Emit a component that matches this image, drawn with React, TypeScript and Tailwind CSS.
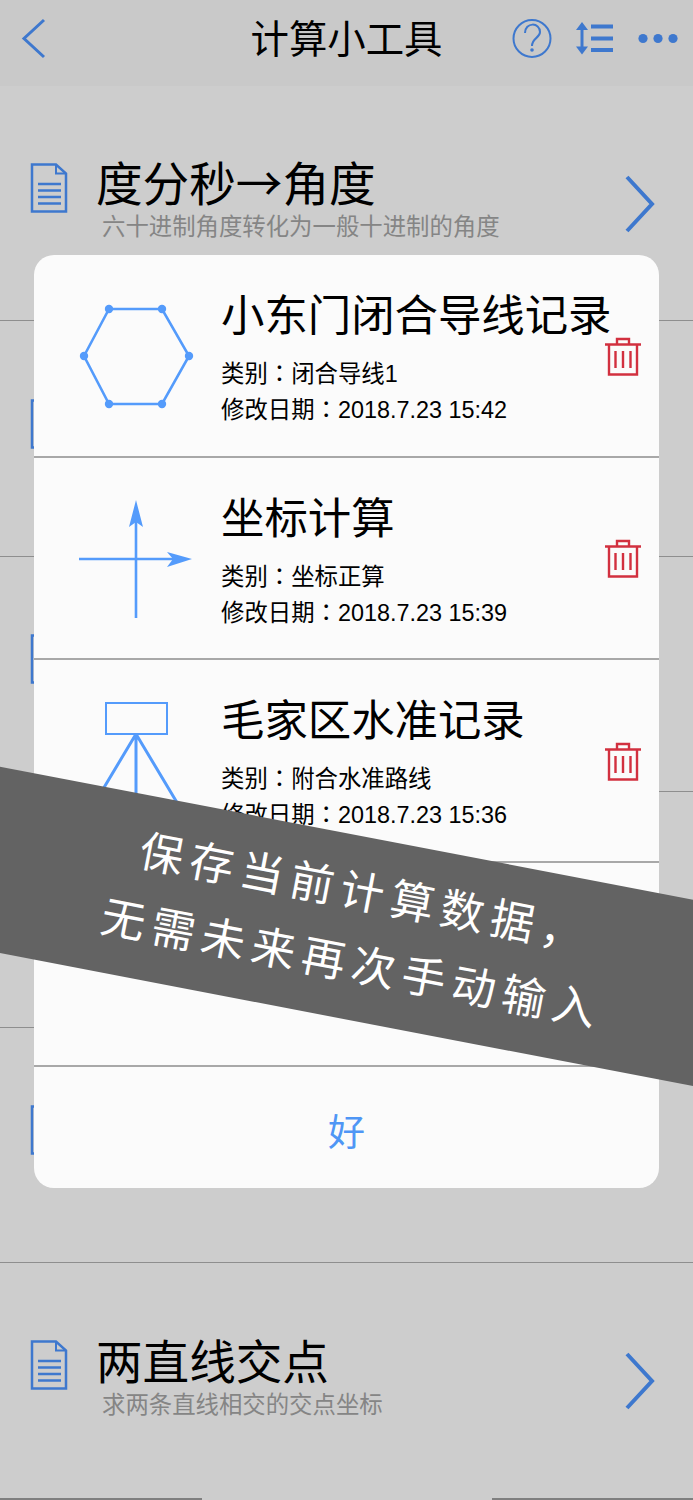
const FONT = "font-['Liberation_Sans','Noto_Sans_CJK_SC',sans-serif]"

function DocIcon() {
  return (
    <svg width="38" height="50" viewBox="0 0 38 50" fill="none" stroke="#3e78ce" className="shrink-0">
      <path d="M2 1.5H26L36 10.5V48.5H2Z" strokeWidth="2.5" />
      <path d="M26 1.5V10.5H36" strokeWidth="2" />
      <path d="M8 21H31M8 27.5H31M8 34H31M8 40.5H31" strokeWidth="2.6" />
    </svg>
  )
}

function Chevron() {
  return (
    <svg width="32" height="58" viewBox="0 0 32 58" fill="none" stroke="#3e78ce" strokeWidth="4" className="mt-[2px]">
      <path d="M3 2L28 29L3 56" />
    </svg>
  )
}

function ListRow({ title, sub }: { title?: React.ReactNode; sub?: string }) {
  return (
    <div className="h-[235.4px] shrink-0 border-b border-[#8e8e8e] flex items-center pl-[30px] pr-[37px]">
      <div className="-mt-[30px]">
        <DocIcon />
      </div>
      {title && (
        <>
          <div className="ml-[28px] flex-1 -mt-[10px]">
            <div className="text-[46.6px] leading-[54px] text-black">{title}</div>
            <div className="text-[23.4px] leading-[30px] ml-[6px] text-[#858585]">{sub}</div>
          </div>
          <Chevron />
        </>
      )}
    </div>
  )
}

function Trash() {
  return (
    <svg width="38" height="40" viewBox="0 0 38 40" fill="none" stroke="#d2303f" strokeWidth="2.4" className="mt-[3px]">
      <path d="M1 7.5H37" />
      <path d="M13 7V2H25V7" />
      <path d="M5 7.5V37.5H33V7.5" />
      <path d="M11.5 14V31M19 14V31M26.5 14V31" />
    </svg>
  )
}

function Hexagon() {
  const pts = [[84, 52], [109, 5], [162, 5], [189, 52], [162, 100], [109, 100]]
  return (
    <svg width="140" height="106" viewBox="70 0 140 106" fill="none" stroke="#549bfb" strokeWidth="2.6" className="mt-[4px]">
      <polygon points={pts.map((p) => p.join(',')).join(' ')} />
      {pts.map((p, i) => (
        <circle key={i} cx={p[0]} cy={p[1]} r="4.2" fill="#549bfb" stroke="none" />
      ))}
    </svg>
  )
}

function Axes() {
  return (
    <svg width="140" height="124" viewBox="70 0 140 124" fill="none" stroke="#549bfb" strokeWidth="2.6">
      <path d="M136 20V122M79 63H175" />
      <path d="M136 4L143 31L136 26L129 31Z M192 63L167 56L173 63L167 71Z" fill="#549bfb" stroke="none" />
    </svg>
  )
}

function Tripod() {
  return (
    <svg width="140" height="140" viewBox="70 0 140 140" fill="none" stroke="#549bfb" strokeWidth="3" className="mt-[22px]">
      <rect x="106" y="2" width="61" height="31" strokeWidth="2" />
      <path d="M136 33L78 130M136 33V130M136 33L194 130" />
    </svg>
  )
}

// the colon sits mid-height in the reference, TC glyph does that
function Colon() {
  return <span className="font-['Noto_Sans_CJK_TC',sans-serif] leading-none">：</span>
}

function SavedRow({ icon, title, type, date }: { icon: React.ReactNode; title: string; type: string; date: string }) {
  return (
    <div className="h-[202.6px] shrink-0 border-b-2 border-[#a8a8a8] flex relative">
      <div className="w-[187px] shrink-0 flex items-center pl-[36px]">{icon}</div>
      <div className="w-[383px] shrink-0 pt-[35px] text-black">
        <div className="text-[43.4px] leading-[52px] whitespace-nowrap">{title}</div>
        <div className="mt-[14px] h-[36px] text-[23.4px] leading-[36px] whitespace-nowrap">类别<Colon />{type}</div>
        <div className="h-[36px] text-[23.4px] leading-[36px] whitespace-nowrap">修改日期<Colon />{date}</div>
      </div>
      <div className="flex items-center">
        <Trash />
      </div>
    </div>
  )
}

export default function App() {
  return (
    <div className={`relative w-[693px] h-[1500px] overflow-hidden bg-[#cdcdcd] ${FONT}`}>
      {/* nav bar */}
      <div className="h-[86px] bg-[#c9c9c9] flex items-center relative">
        <svg width="693" height="86" viewBox="0 0 693 86" fill="none" className="absolute left-0 top-0">
          <path d="M44 20L24 38.5L44 57" stroke="#3e78ce" strokeWidth="3" />
          <circle cx="532" cy="38.5" r="18.5" stroke="#3e78ce" strokeWidth="2" />
          <path d="M525 33C525 22 540 22 540 32C540 38 532 38 532 46" stroke="#3e78ce" strokeWidth="2" />
          <circle cx="532" cy="50" r="1.8" fill="#3e78ce" />
          <path d="M582 26V50" stroke="#3e78ce" strokeWidth="3" />
          <path d="M582 22L588 30H576ZM582 54.5L588 46.5H576Z" fill="#3e78ce" />
          <path d="M591 26.5H613M591 38.5H613M591 50H613" stroke="#3e78ce" strokeWidth="4" />
          <circle cx="643" cy="38.5" r="4.6" fill="#3e78ce" />
          <circle cx="658" cy="38.5" r="4.6" fill="#3e78ce" />
          <circle cx="673" cy="38.5" r="4.6" fill="#3e78ce" />
        </svg>
        <div className="w-full text-center text-[38.4px] text-black -mt-[6px]">计算小工具</div>
      </div>

      {/* list behind the dialog */}
      <div className="flex flex-col">
        <ListRow
          title={
            <>
              度分秒<span className="font-['Noto_Sans_CJK_SC',sans-serif]">→</span>角度
            </>
          }
          sub="六十进制角度转化为一般十进制的角度"
        />
        <ListRow />
        <ListRow />
        <ListRow />
        <ListRow />
        <div className="h-[235px] shrink-0 flex items-center pl-[30px] pr-[37px]">
          <div className="-mt-[30px]">
            <DocIcon />
          </div>
          <div className="ml-[28px] flex-1 -mt-[4px]">
            <div className="text-[46.6px] leading-[54px] text-black">两直线交点</div>
            <div className="text-[23.4px] leading-[30px] ml-[6px] text-[#858585]">求两条直线相交的交点坐标</div>
          </div>
          <Chevron />
        </div>
      </div>

      {/* bottom strokes */}
      <div className="absolute left-0 right-0 bottom-0 h-[2px] flex justify-between">
        <div className="w-[202px] bg-[#7f7f7f]" />
        <div className="w-[201px] bg-[#7f7f7f]" />
      </div>

      {/* saved records dialog */}
      <div className="absolute left-[34px] top-[255px] w-[625px] h-[933px] bg-[#fbfbfb] rounded-[20px] flex flex-col overflow-hidden">
        <SavedRow icon={<Hexagon />} title="小东门闭合导线记录" type="闭合导线1" date="2018.7.23 15:42" />
        <SavedRow icon={<Axes />} title="坐标计算" type="坐标正算" date="2018.7.23 15:39" />
        <SavedRow icon={<Tripod />} title="毛家区水准记录" type="附合水准路线" date="2018.7.23 15:36" />
        <div className="h-[204px] shrink-0 border-b-2 border-[#a8a8a8]" />
        <div className="flex-1 flex items-center justify-center text-[37px] text-[#4f96f5] mt-[12px]">好</div>
      </div>

      {/* promo banner */}
      <div className="absolute left-[-103px] top-[835px] w-[900px] h-[183px] bg-[#636363] rotate-[10.86deg] flex flex-col items-center justify-center pl-[24px] text-white text-[44px] leading-[72px] tracking-[7px]">
        <div>保存当前计算数据，</div>
        <div>无需未来再次手动输入</div>
      </div>
    </div>
  )
}
